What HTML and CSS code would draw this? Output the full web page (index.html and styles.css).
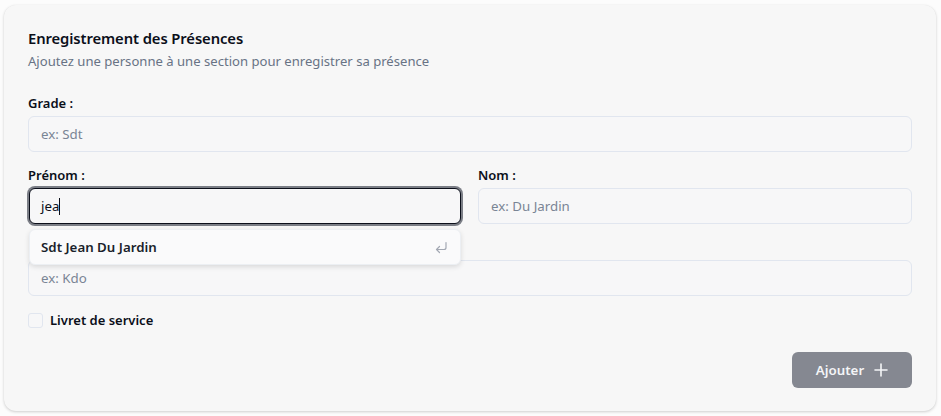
FILE: index.html
```html
<!DOCTYPE html>
<html lang="fr">
<head>
<meta charset="utf-8">
<title>Enregistrement des Présences</title>
<link rel="stylesheet" href="styles.css">
</head>
<body>
<div class="card">
  <div class="header">
    <h1 class="title">Enregistrement des Présences</h1>
    <p class="subtitle">Ajoutez une personne à une section pour enregistrer sa présence</p>
  </div>
  <div class="form">
    <div class="field">
      <label class="label">Grade :</label>
      <div class="input"><span class="placeholder">ex: Sdt</span></div>
    </div>
    <div class="row">
      <div class="field field-rel">
        <label class="label">Prénom :</label>
        <div class="input input-focus"><span class="value">jea</span><span class="caret"></span></div>
        <div class="dropdown">
          <span class="option">Sdt Jean Du Jardin</span>
          <svg class="enter" width="14" height="14" viewBox="0 0 14 14" fill="none" stroke="currentColor" stroke-width="1.2" stroke-linecap="round" stroke-linejoin="round"><path d="M12 2.5v5a2 2 0 0 1-2 2H2.5"/><path d="M5.5 6.5l-3 3 3 3"/></svg>
        </div>
      </div>
      <div class="field">
        <label class="label">Nom :</label>
        <div class="input"><span class="placeholder">ex: Du Jardin</span></div>
      </div>
    </div>
    <div class="field">
      <div class="label-spacer"></div>
      <div class="input"><span class="placeholder">ex: Kdo</span></div>
    </div>
    <div class="check-row">
      <span class="checkbox"></span>
      <span class="check-label">Livret de service</span>
    </div>
  </div>
  <div class="actions">
    <button class="btn">Ajouter
      <svg width="14" height="14" viewBox="0 0 14 14" fill="none" stroke="currentColor" stroke-width="1.6" stroke-linecap="round"><path d="M7 1v12M1 7h12"/></svg>
    </button>
  </div>
</div>
</body>
</html>
```
FILE: styles.css
```css
* { box-sizing: border-box; }
html, body { margin: 0; padding: 0; }
body {
  background: #fcfcfc;
  font-family: "Noto Sans", "Open Sans", sans-serif;
  color: #0f172a;
  width: 941px;
  height: 416px;
  overflow: hidden;
}
.card {
  margin: 5px 5px 0 4px;
  height: 406px;
  background: #f7f7f7;
  border-radius: 12px;
  box-shadow: 0 1px 3px rgba(0,0,0,0.18), 0 0 1px rgba(0,0,0,0.06);
  padding: 23px 24px 23px 24px;
  display: flex;
  flex-direction: column;
}
.title {
  margin: 0;
  font-size: 14.8px;
  line-height: 20px;
  font-weight: 600;
  color: #0b0f1a;
  letter-spacing: -0.1px;
}
.subtitle {
  margin: 3px 0 0 0;
  font-size: 13.1px;
  line-height: 20px;
  color: #687385;
}
.form {
  margin-top: 22px;
  display: flex;
  flex-direction: column;
  gap: 13px;
}
.field { display: flex; flex-direction: column; flex: 1; min-width: 0; }
.field-rel { position: relative; }
.label {
  font-size: 13px;
  line-height: 20px;
  font-weight: 600;
  color: #0b0f1a;
  margin-bottom: 3px;
}
.label-spacer { height: 23px; }
.input {
  height: 36px;
  border: 1px solid #e1e6ef;
  border-radius: 6px;
  background: #f7f7f8;
  display: flex;
  align-items: center;
  padding: 0 12px;
  font-size: 13.3px;
}
.placeholder { color: #7a8595; }
.value { color: #0b0f1a; }
.caret { display: inline-block; width: 1px; height: 17px; background: #0b0f1a; margin-left: 0; }
.input-focus {
  border: 1px solid #0b0f1a;
  box-shadow: 0 0 0 2px #7b7e86;
  margin: 0 1px;
  padding-left: 11px;
}
.row { display: flex; gap: 16px; }
.dropdown {
  position: absolute;
  left: 1px;
  right: 1px;
  top: 64px;
  height: 36px;
  background: #fafafb;
  border: 1px solid #eceff3;
  border-radius: 6px;
  box-shadow: 0 2px 5px rgba(0,0,0,0.12);
  display: flex;
  align-items: center;
  justify-content: space-between;
  padding: 0 12px 0 11px;
  z-index: 2;
}
.option { font-size: 13.3px; font-weight: 600; color: #1a1f2b; }
.enter { color: #a3a8b3; }
.check-row {
  margin-top: 1px;
  display: flex;
  align-items: center;
  gap: 7px;
  height: 20px;
}
.checkbox {
  width: 15px;
  height: 15px;
  border: 1px solid #e1e6ef;
  border-radius: 3px;
  background: #f7f7f8;
}
.check-label { font-size: 13px; font-weight: 600; color: #0b0f1a; }
.actions {
  margin-top: auto;
  display: flex;
  justify-content: flex-end;
}
.btn {
  width: 120px;
  height: 36px;
  border: none;
  border-radius: 6px;
  background: #858891;
  color: #f4f5f7;
  font-family: inherit;
  font-size: 13.3px;
  font-weight: 600;
  display: flex;
  align-items: center;
  justify-content: center;
  gap: 10px;
  padding: 0;
}
```
